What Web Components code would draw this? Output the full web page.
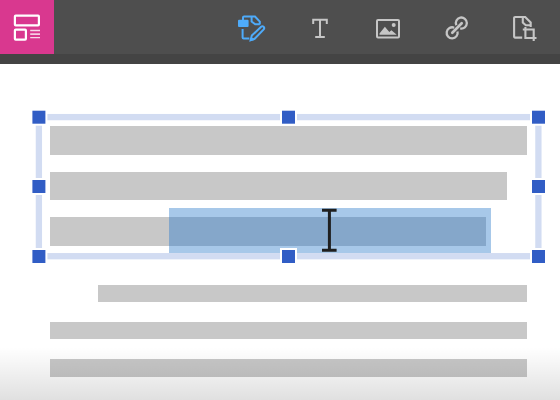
<!DOCTYPE html>
<html lang="en">
<head>
<meta charset="utf-8">
<title>Document editor</title>
<style>
html,body{margin:0;width:560px;height:400px;overflow:hidden;background:#fff;font-family:"Liberation Sans",Arial,sans-serif}
</style>
</head>
<body>
<editor-app></editor-app>
<script>
const attach = (el, html) => { el.attachShadow({mode:'open'}).innerHTML = html; };

const icons = {
  layout: `<g fill="none" stroke="#fff" stroke-width="2.2"><rect x=".9" y="1.6" width="24" height="9.8" rx=".8"/><rect x=".9" y="15.6" width="11" height="10" rx=".8"/></g><g stroke="#fff" stroke-width="1.3"><path d="M16.2 16.5H26M16.2 23.7H26" opacity=".8"/><path d="M16.2 20.1H26"/></g>`,
  edit: `<g fill="none" stroke="currentColor" stroke-width="2"><path d="M5 6V2.6q0-1.1 1.1-1.1H17L21.8 6.6V9.6"/><path d="M13.6 1.5V6.6L17.2 9.2H21.8"/><path d="M4.6 14V22.6q0 1 1 1H11.4"/><path d="M12.6 25.2l1.2-4.6L23.1 11.8q1.3-1.1 2.5 0t.1 2.6L16.6 23.8z"/></g><path d="M0 5.8q0-1 1-1H9.6q1 0 1 1V11q0 1-1 1H1q-1 0-1-1zM12 26.2l1.2-4.4 3.4 3.1z" fill="currentColor"/>`,
  text: `<path d="M1.2 6V1.8H14.8V6M8 1.8V18.9M3.2 18.9H12.8" fill="none" stroke="currentColor" stroke-width="2"/>`,
  image: `<rect x="1" y="1" width="22" height="17.4" rx="1" fill="none" stroke="currentColor" stroke-width="2"/><circle cx="17.7" cy="6" r="2" fill="currentColor"/><path d="M3.5 15.7V14.4L8.9 7.8l4.4 5.2 2.1-1.7 5.1 4.1v.3z" fill="currentColor"/>`,
  link: `<g fill="none" stroke="currentColor" stroke-width="2.3"><path d="M11.3 9.2A5.5 5.5 0 1 1 15.2 12.4"/><path d="M9.2 11.7A5.5 5.5 0 1 0 12.5 15.5"/><path d="M7.3 16.7L16.7 7.3" stroke-width="2.7" stroke-linecap="round"/></g>`,
  crop: `<g fill="none" stroke="currentColor" stroke-width="2.1"><path d="M9.2 21.6H2.1q-1 0-1-1V2q0-1 1-1H12.2L17.7 6.5V11"/><path d="M9.8 1V6.6l3 2.6h5"/><path d="M12.4 11V22H23.5M9.8 13.5H20.7V25"/></g>`
};
customElements.define('tool-icon', class extends HTMLElement {
  connectedCallback(){
    const w=this.getAttribute('w'),h=this.getAttribute('h');
    attach(this,`<style>:host{display:block}svg{display:block;overflow:visible}</style><svg width="${w}" height="${h}" viewBox="0 0 ${w} ${h}">${icons[this.getAttribute('name')]}</svg>`);
  }
});

customElements.define('tool-bar', class extends HTMLElement {
  connectedCallback(){
    attach(this,`<style>
      :host{display:flex;height:54px;background:#4e4e4e;border-bottom:10px solid #444;color:#c6c6c6}
      .brand{width:54px;height:54px;background:#d9388f;display:grid;place-items:center}
      .tools{margin-left:163px;display:grid;grid-template-columns:69px 68.4px 68.2px 68px 68.4px;align-items:center;justify-items:center;height:56px}
      .active{color:#4eabfa}
    </style>
    <div class="brand"><tool-icon name="layout" w="26" h="27"></tool-icon></div>
    <div class="tools">
      <tool-icon class="active" name="edit" w="28" h="26"></tool-icon>
      <tool-icon name="text" w="16" h="20"></tool-icon>
      <tool-icon name="image" w="24" h="19"></tool-icon>
      <tool-icon name="link" w="24" h="24"></tool-icon>
      <tool-icon name="crop" w="24" h="25"></tool-icon>
    </div>`);
  }
});

customElements.define('text-line', class extends HTMLElement {
  connectedCallback(){
    attach(this,`<style>:host{display:block;background:#c8c8c8}</style><slot></slot>`);
  }
});

customElements.define('selection-frame', class extends HTMLElement {
  connectedCallback(){
    const xs=[38.9,288.5,538.5],ys=[53.2,122.5,192.5];
    let handles='';
    ys.forEach((y,r)=>xs.forEach((x,c)=>{ if(r===1&&c===1)return; handles+=`<rect x="${x-7.5}" y="${y-7.5}" width="15" height="15"/>`; }));
    attach(this,`<style>
      :host{position:absolute;inset:0}
      svg{display:block}
      .frame{fill:none;stroke:#d2dcf2;stroke-width:6.3}
      .handles{fill:#315dc5;stroke:#fff;stroke-width:2}
    </style><svg width="560" height="336"><rect class="frame" x="38.9" y="53.1" width="499.5" height="139.1"/><g class="handles">${handles}</g></svg>`);
  }
});

customElements.define('text-highlight', class extends HTMLElement {
  connectedCallback(){
    attach(this,`<style>
      :host{position:absolute;left:169px;top:144px;width:322px;height:45px;background:#a7c8e9}
      div{position:absolute;left:0;top:9px;width:317px;height:29px;background:#85a7ca}
      svg{position:absolute;left:153px;top:0}
    </style><div></div><svg width="15" height="45"><path d="M0 2.3H14.6M7.4 2V42M0 42.3H14.6" fill="none" stroke="#1f1f1f" stroke-width="3"/></svg>`);
  }
});

customElements.define('document-page', class extends HTMLElement {
  connectedCallback(){
    attach(this,`<style>
      :host{display:block;position:relative;height:336px;background:#fff}
      .lines{display:flex;flex-direction:column;align-items:flex-start;padding:62px 33px 0 50px}
      .shade{position:absolute;inset:283px 0 0;background:linear-gradient(rgba(0,0,0,0),rgba(0,0,0,.12))}
    </style>
    <div class="lines">
      <text-line style="width:477px;height:29px"></text-line>
      <text-line style="width:457px;height:28px;margin-top:17px"></text-line>
      <text-line style="width:436px;height:29px;margin-top:17px"></text-line>
      <text-line style="width:429px;height:17px;margin:39px 0 0 48px"></text-line>
      <text-line style="width:477px;height:17px;margin-top:20px"></text-line>
      <text-line style="width:477px;height:18px;margin-top:20px"></text-line>
    </div>
    <text-highlight></text-highlight>
    <selection-frame></selection-frame>
    <div class="shade"></div>`);
  }
});

customElements.define('editor-app', class extends HTMLElement {
  connectedCallback(){
    attach(this,`<style>:host{display:flex;flex-direction:column;width:560px;height:400px}</style><tool-bar></tool-bar><document-page></document-page>`);
  }
});
</script>
</body>
</html>
